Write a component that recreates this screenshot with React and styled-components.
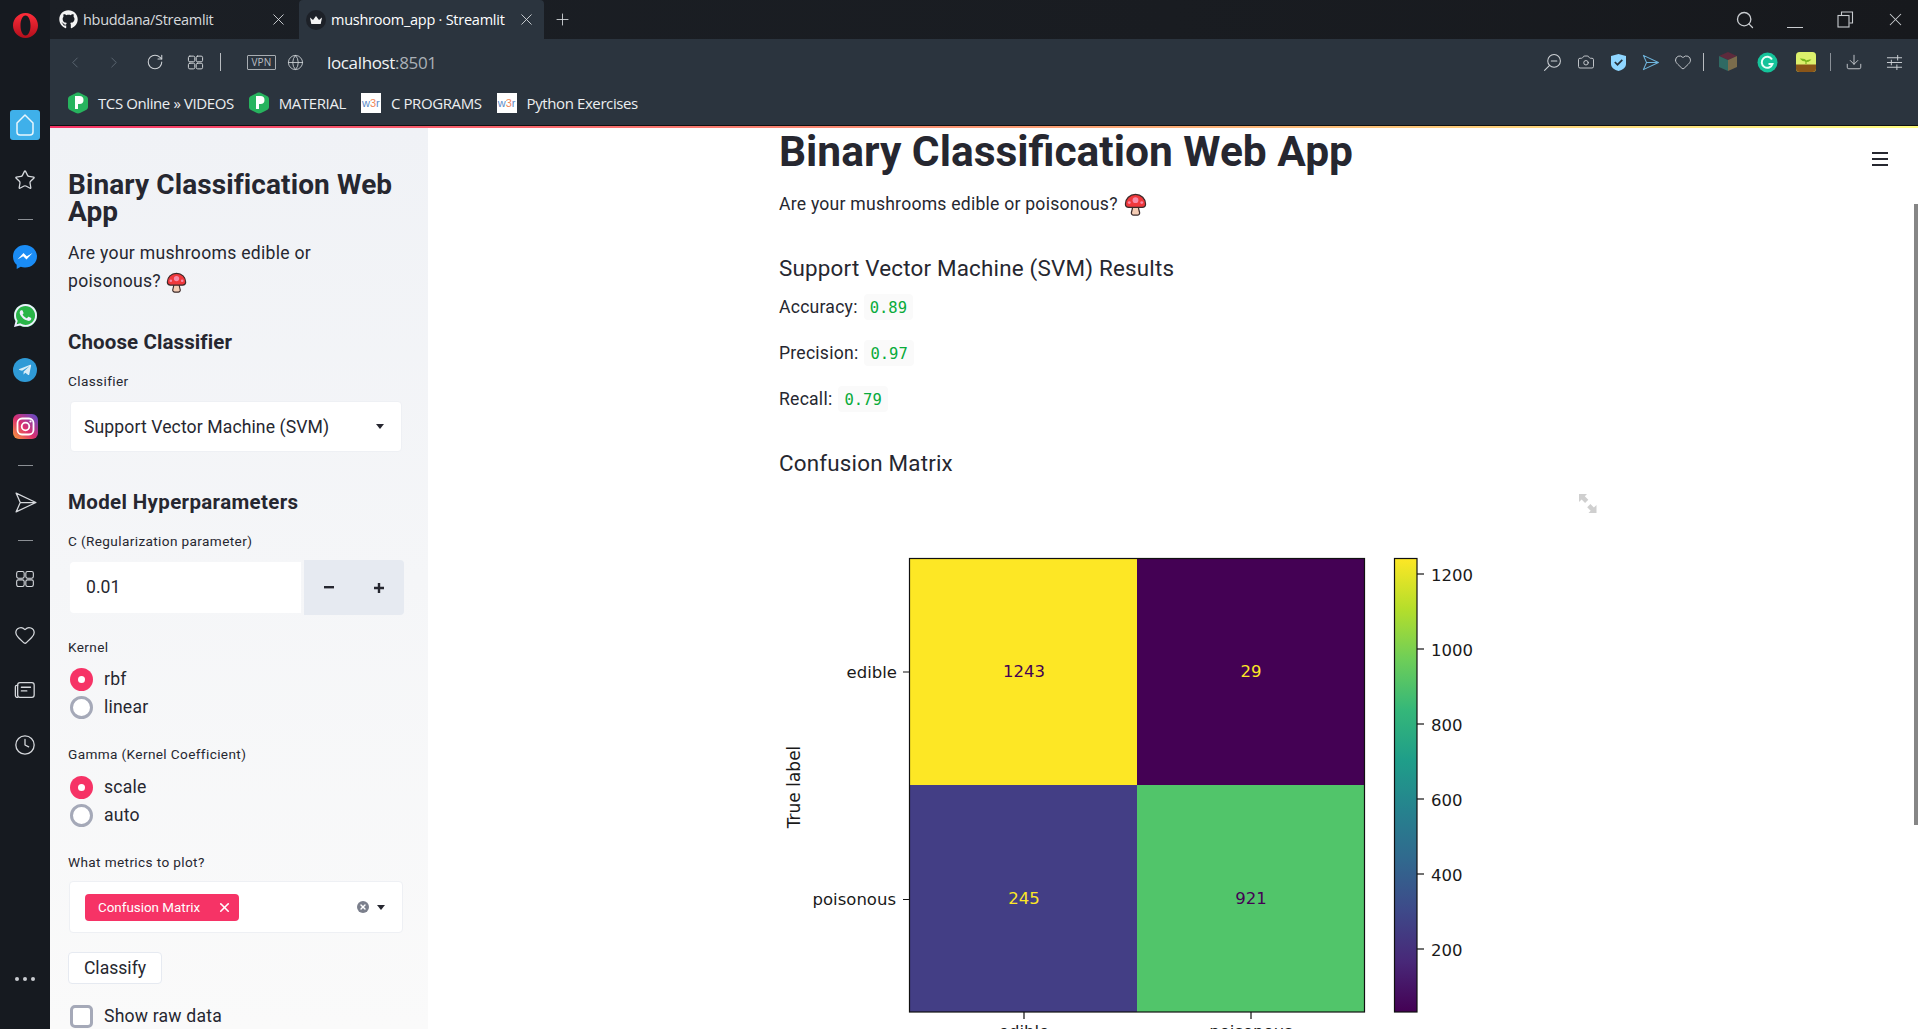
import React from "react";
import styled, { createGlobalStyle } from "styled-components";
import { FaGithub, FaWhatsapp, FaTelegramPlane } from "react-icons/fa";
import { Star, Heart, Clock, Camera, Download, Globe, RotateCw, ChevronLeft, ChevronRight, Plus, X, Search } from "lucide-react";

const Global = createGlobalStyle`
  html, body { margin: 0; padding: 0; height: 100%; overflow: hidden; background: #fff; }
  * { box-sizing: border-box; }
`;

const PLEX = `Roboto, "Noto Sans", sans-serif`;
const CHROME = `"Open Sans", "Noto Sans", sans-serif`;

const Frame = styled.div`display: flex; width: 1918px; height: 1029px; overflow: hidden; position: relative; background: #fff;`;
const Rail = styled.aside`width: 50px; flex: none; background: #161a20; display: flex; flex-direction: column; align-items: center; color: #d5d8dc;`;
const RailSlot = styled.div`height: ${p => p.$h}px; margin-bottom: ${p => p.$mb || 0}px; flex: none; display: flex; align-items: center; justify-content: center; width: 100%; position: relative;`;
const RailRule = styled.div`width: 15px; height: 1px; background: #8b8f94;`;
const RailSpacer = styled.div`flex: 1;`;
const HomeTile = styled.div`width: 30px; height: 30px; border-radius: 3px; background: #3fb0ea; display: flex; align-items: center; justify-content: center;`;
const Dots = styled.div`display: flex; gap: 4px;`;
const Dot = styled.i`width: 4px; height: 4px; border-radius: 50%; background: #c9ccd0;`;
const TgCircle = styled.div`width: 24px; height: 24px; border-radius: 50%; background: #2f9ad6; color: #d9edf7; display: flex; align-items: center; justify-content: center; font-size: 14px;`;
const WaDisc = styled.div`width: 23px; height: 23px; border-radius: 50%; background: #29b548; color: #eef; display: flex; align-items: center; justify-content: center; font-size: 27px; line-height: 0;`;

const Column = styled.div`flex: 1; min-width: 0; display: flex; flex-direction: column;`;
const TabStrip = styled.div`height: 39px; flex: none; display: flex; background: linear-gradient(90deg, #1b1f25, #191c21 60%, #17191d);`;
const Tab = styled.div`
  width: ${p => p.$w}px; height: 39px; display: flex; align-items: center; flex: none; padding-left: ${p => p.$pl}px;
  background: ${p => p.$active ? "#2b343e" : "transparent"};
  border-radius: ${p => p.$active ? "4px 4px 0 0" : "0"};
  color: ${p => p.$active ? "#fff" : "#d7dadd"};
  font: 14.5px ${CHROME}; letter-spacing: ${p => p.$active ? -0.25 : -0.3}px; white-space: nowrap;
`;
const TabTitle = styled.span`flex: 1; margin-left: ${p => p.$ml}px;`;
const TabClose = styled.span`display: flex; margin-right: ${p => p.$mr}px; color: #dcdfe2;`;
const NewTab = styled.div`margin-left: 9px; height: 39px; display: flex; align-items: center; color: #d7dadd;`;
const StripSpacer = styled.div`flex: 1;`;
const WinControls = styled.div`display: flex; align-items: center; color: #c9ccd0;`;
const WinBtn = styled.div`width: ${p => p.$w}px; margin-left: ${p => p.$ml || 0}px; display: flex; justify-content: center; align-items: center;`;

const Toolbar = styled.div`height: 46px; flex: none; background: #2b343e; display: flex; align-items: center; padding-left: 16px; color: #cfd3d7;`;
const NavSlot = styled.div`width: ${p => p.$w}px; flex: none; display: flex; align-items: center; justify-content: center; color: ${p => p.$dim ? "#5f6a75" : "#cfd3d7"};`;
const Divider = styled.div`width: 1px; height: 18px; background: ${p => p.$c || "#b8bcc0"}; flex: none;`;
const VpnBadge = styled.div`width: 29px; height: 15px; border: 1px solid #a8adb2; border-radius: 1px; font: 10px/13px ${CHROME}; letter-spacing: .2px; text-align: center; color: #b9bdc1; margin-left: 26px;`;
const Address = styled.div`margin-left: 18px; font: 17px ${CHROME}; letter-spacing: -0.35px; color: #f1f3f4; flex: 1;`;
const Port = styled.span`color: #aab0b6;`;
const Tools = styled.div`display: flex; align-items: center;`;
const ToolSlot = styled.div`width: ${p => p.$w}px; flex: none; display: flex; align-items: center; justify-content: center;`;

const Bookmarks = styled.div`height: 41px; flex: none; background: #2b343e; display: flex; align-items: center; padding: 0 0 4px 18px; color: #eceef0; font: 15px ${CHROME}; letter-spacing: -0.4px; border-bottom: 1px solid #111;`;
const Bookmark = styled.div`display: flex; align-items: center; margin-right: 15px; white-space: nowrap;`;
const BookmarkLabel = styled.span`margin-left: 10px;`;
const W3 = styled.span`width: 20px; height: 20px; background: #fff; display: inline-flex; align-items: center; justify-content: center; font: 11px "Liberation Sans", sans-serif; color: #5b8bc9; letter-spacing: 0;`;
const W3Three = styled.span`color: #f0875a;`;

const Accent = styled.div`height: 2px; flex: none; background: linear-gradient(90deg, #f63366, #fffd80);`;
const Body = styled.div`flex: 1; min-height: 0; display: flex; position: relative;`;

const Sidebar = styled.aside`width: 378px; flex: none; padding: 43px 25px 0 18px; background: linear-gradient(180deg, #f0f2f6, #fafafa); color: #262730; font-family: ${PLEX};`;
const SideTitle = styled.h1`margin: 0; font-size: 28px; line-height: 27px; font-weight: 700; letter-spacing: .1px;`;
const SidePara = styled.p`margin: 14px 0 0; font-size: 17.6px; line-height: 28px; width: 290px; letter-spacing: .28px;`;
const SideHeading = styled.h3`margin: ${p => p.$mt}px 0 0; font-size: 20.5px; line-height: 28px; font-weight: 700; letter-spacing: ${p => p.$ls}px;`;
const FieldLabel = styled.div`margin-top: ${p => p.$mt}px; font-size: 13.6px; line-height: 18px; letter-spacing: .38px;`;
const SelectBox = styled.div`
  margin: ${p => p.$mt}px 0 0 ${p => p.$ml}px; height: ${p => p.$h}px; width: ${p => p.$w}px; background: #fff; border: 1px solid #eef0f4; border-radius: 4px;
  display: flex; align-items: center; padding: 0 17px 0 ${p => p.$pl}px; font-size: 17.6px; letter-spacing: .1px;
`;
const SelectValue = styled.span`flex: 1;`;
const Caret = styled.i`width: 0; height: 0; border: 4px solid transparent; border-top: 5px solid #262730; border-bottom: 0; margin-left: ${p => p.$ml || 0}px;`;
const NumberRow = styled.div`margin-top: 10px; height: 55px; width: 336px; display: flex; align-items: center;`;
const NumberInput = styled.div`width: 232px; height: 51px; margin-left: 2px; background: #fff; padding-left: 16px; font-size: 17.6px; line-height: 51px; border-radius: 4px 0 0 4px;`;
const Stepper = styled.div`width: 101px; height: 55px; margin-left: 3px; background: #e6eaf1; border-radius: 0 4px 4px 0; display: flex;`;
const StepBtn = styled.div`flex: 1; display: flex; align-items: center; justify-content: center;`;
const RadioGroup = styled.div`margin-top: ${p => p.$mt}px;`;
const OptionRow = styled.div`height: 28px; display: flex; align-items: center; font-size: 17.6px; padding-left: 2px; letter-spacing: .2px;`;
const RadioMark = styled.span`
  width: 23px; height: 23px; border-radius: 50%; flex: none; margin-right: 11px; display: flex; align-items: center; justify-content: center;
  background: ${p => p.$on ? "#f63366" : "#fff"}; border: ${p => p.$on ? "0" : "3px solid #a5a9b8"};
`;
const RadioPip = styled.i`width: 7px; height: 7px; border-radius: 50%; background: #fff;`;
const CheckMark = styled.span`width: 23px; height: 23px; border-radius: 5px; flex: none; margin-right: 11px; background: #fff; border: 3px solid #a5a9b8;`;
const Tag = styled.div`width: 154px; height: 27px; background: #f63366; border-radius: 4px; color: #fff; font-size: 13.4px; letter-spacing: 0; display: flex; align-items: center; justify-content: space-between; padding: 0 7px 0 13px;`;
const Grow = styled.div`flex: 1;`;
const ClearDot = styled.span`width: 12px; height: 12px; border-radius: 50%; background: #7b7f8c; display: flex; align-items: center; justify-content: center; color: #fff;`;
const ClassifyBtn = styled.div`margin-top: 19px; width: 94px; height: 32px; background: #fff; border: 1px solid #e6eaf1; border-radius: 4px; font-size: 17.6px; line-height: 30px; text-align: center;`;
const CheckRow = styled(OptionRow)`margin-top: 18px;`;

const Main = styled.main`flex: 1; min-width: 0; padding-left: 351px; color: #262730; font-family: ${PLEX}; background: #fff; overflow: hidden; position: relative;`;
const Title = styled.h1`margin: 0; font-size: 42.5px; line-height: 48px; font-weight: 700;`;
const Para = styled.p`margin: ${p => p.$mt}px 0 0; font-size: 17.6px; line-height: 28px; display: flex; align-items: center; letter-spacing: .23px;`;
const SubTitle = styled.h3`margin: ${p => p.$mt}px 0 0; font-size: 22.4px; line-height: 32px; font-weight: 400; letter-spacing: .2px;`;
const Code = styled.code`margin-left: 6px; height: 26px; display: inline-flex; align-items: center; padding: 1px 6px 0; background: #fafafa; border-radius: 4px; font: 15.5px "DejaVu Sans Mono", monospace; letter-spacing: 0; color: #09ab3b;`;
const ChartSvg = styled.svg`display: block; margin-top: 11px; width: 840px; height: 550px; overflow: hidden;`;
const MenuBtn = styled.div`position: absolute; top: 24px; right: 30px; width: 16px; height: 14px; display: flex; flex-direction: column; justify-content: space-between;`;
const MenuLine = styled.i`height: 2px; background: #262730;`;
const ScrollThumb = styled.div`position: absolute; top: 76px; right: 0; width: 4px; height: 621px; background: #868686;`;
const MushroomSvg = styled.svg`flex: none; margin: -6px 0 -6px ${p => p.$ml}px; vertical-align: middle;`;

const Mushroom = ({ size = 23, ml = 6 }) => (
  <MushroomSvg $ml={ml} width={size} height={size} viewBox="0 0 24 24">
    <path d="M9 14h6c.2 3 1 5 1.3 6.5.2 1.3-.8 2.5-2.3 2.5h-4c-1.500 0-2.500-1.200-2.300-2.500C8 19 8.800 17 9 14z" fill="#f5cdb5" stroke="#3a2a2a" strokeWidth="1.300" />
    <path d="M12 1.500C6 1.500 1.500 6 1.500 11.500c0 2 1.500 3.500 3.500 3.500h14c2 0 3.500-1.500 3.500-3.500C22.500 6 18 1.500 12 1.500z" fill="#f0383c" stroke="#3a2a2a" strokeWidth="1.300" />
    <circle cx="12" cy="7.500" r="3" fill="#f78aa8" />
    <circle cx="5.500" cy="10" r="1.500" fill="#f78aa8" />
    <circle cx="18.500" cy="10" r="1.500" fill="#f78aa8" />
  </MushroomSvg>
);

const OperaLogo = () => (
  <svg width="25" height="25" viewBox="0 0 25 25">
    <defs><linearGradient id="op" x1="0" y1="0" x2="0" y2="1"><stop offset="0" stopColor="#ff2d3a" /><stop offset="1" stopColor="#b30f1c" /></linearGradient></defs>
    <path fillRule="evenodd" fill="url(#op)" d="M12.500 0C19.400 0 25 5.600 25 12.500S19.400 25 12.500 25 0 19.400 0 12.500 5.600 0 12.500 0zm0 2.500c-3 0-5 4.500-5 10s2 10 5 10 5-4.500 5-10-2-10-5-10z" />
  </svg>
);

const CrownIcon = () => (
  <svg width="20" height="20" viewBox="0 0 20 20">
    <circle cx="10" cy="10" r="10" fill="#1d2128" />
    <path d="M4 7.500l3 2.500 3-4 3 4 3-2.500-1.300 6.500H5.300z" fill="#f4f4f4" />
  </svg>
);

const PIcon = () => (
  <svg width="20" height="22" viewBox="0 0 20 22">
    <path d="M8 1L2 4C.800 4.600 0 5.800 0 7v8c0 1.200.800 2.400 2 3l6 3c1.300.600 2.700.600 4 0l6-3c1.200-.600 2-1.800 2-3V7c0-1.200-.800-2.400-2-3l-6-3C10.700.400 9.300.400 8 1z" fill="#27b35e" />
    <path d="M7 4h4.500a4 4 0 0 1 0 8H10v5H7z" fill="#fff" />
  </svg>
);

const Cube = () => (
  <svg width="20" height="20" viewBox="0 0 20 20">
    <path d="M10 0l9 4-9 4-9-4z" fill="#5d2a3c" />
    <path d="M1 4l9 4v11l-9-4z" fill="#2f6a63" />
    <path d="M19 4l-9 4v11l9-4z" fill="#7a6c4c" />
  </svg>
);

const Grammarly = () => (
  <svg width="21" height="21" viewBox="0 0 21 21">
    <circle cx="10.500" cy="10.500" r="10" fill="#15c39a" />
    <path d="M15 7.500a5.500 5.500 0 1 0 .5 4.500h-4" fill="none" stroke="#eafff8" strokeWidth="2" />
  </svg>
);

const Forest = () => (
  <svg width="20" height="20" viewBox="0 0 20 20">
    <rect width="20" height="20" rx="3.500" fill="#dcf06c" />
    <path d="M0 12.500h20V16.500a3.500 3.500 0 0 1-3.500 3.500h-13A3.500 3.500 0 0 1 0 16.500z" fill="#8a5518" />
    <path d="M10 12V9M10 9C8 9 6 8.500 5 7c2 0 4 .3 5 2zm0 .5c1.500 0 3-.5 4-1.500-1.800 0-3.200.3-4 1.500z" stroke="#7cb61f" strokeWidth="1.200" fill="#7cb61f" />
  </svg>
);

const Line = ({ w = 18, children, c = "currentColor", sw = 1.300, vb = 24 }) => (
  <svg width={w} height={w} viewBox={`0 0 ${vb} ${vb}`} fill="none" stroke={c} strokeWidth={sw} strokeLinejoin="round" strokeLinecap="round">{children}</svg>
);

const GridIcon = ({ w = 17, sw = 1.400 }) => (
  <Line w={w} sw={sw}>
    <rect x="2" y="3" width="9" height="8" rx="2" /><rect x="13" y="3" width="9" height="8" rx="2" />
    <rect x="2" y="13" width="9" height="8" rx="2" /><rect x="13" y="13" width="9" height="8" rx="2" />
  </Line>
);

const SendIcon = ({ w = 22, c = "currentColor", sw = 1.300 }) => (
  <Line w={w} c={c} sw={sw}><path d="M3 3l19 9-19 9 4-9zM7 12h15" /></Line>
);

const ticks = [[1200, 574], [1000, 649], [800, 724], [600, 799], [400, 874], [200, 949]];
const viridis = ["#fde725", "#b5de2b", "#6ece58", "#35b779", "#1f9e89", "#26828e", "#31688e", "#3e4989", "#482878", "#440154"];
const chartText = { fontFamily: "DejaVu Sans, sans-serif", fontSize: 16.500, fill: "#1a1a1a" };
const cellText = { fontFamily: "DejaVu Sans, sans-serif", fontSize: 16.500, textAnchor: "middle" };

const Chart = () => (
  <ChartSvg viewBox="779 490 840 550">
    <defs>
      <linearGradient id="vir" x1="0" y1="0" x2="0" y2="1">
        {viridis.map((c, i) => <stop key={c} offset={i / (viridis.length - 1)} stopColor={c} />)}
      </linearGradient>
    </defs>
    <g fill="#cfcfcf">
      <path d="M1579 494h8l-2.200 2.200 3.500 3.500-3.200 3.200-3.500-3.500-2.600 2.600z" />
      <path d="M1596.500 513h-8l2.200-2.200-3.500-3.500 3.200-3.200 3.500 3.500 2.600-2.600z" />
    </g>
    <rect x="909" y="558" width="228" height="227" fill="#fde725" />
    <rect x="1137" y="558" width="228" height="227" fill="#440154" />
    <rect x="909" y="785" width="228" height="227" fill="#433e85" />
    <rect x="1137" y="785" width="228" height="227" fill="#51c56a" />
    <rect x="909.500" y="558.500" width="455" height="453.500" fill="none" stroke="#111" strokeWidth="1.200" />
    <text x="1024" y="677" {...cellText} fill="#440154">1243</text>
    <text x="1251" y="677" {...cellText} fill="#fde725">29</text>
    <text x="1024" y="904" {...cellText} fill="#fde725">245</text>
    <text x="1251" y="904" {...cellText} fill="#440154">921</text>
    <path d="M903 672h6M903 899.500h6M1024 1012v7M1251 1012v7" stroke="#111" strokeWidth="1.200" />
    <text x="897" y="678" textAnchor="end" {...chartText}>edible</text>
    <text x="896" y="905" textAnchor="end" {...chartText}>poisonous</text>
    <text x="1024" y="1037" textAnchor="middle" {...chartText}>edible</text>
    <text x="1251" y="1037" textAnchor="middle" {...chartText}>poisonous</text>
    <text transform="translate(800 787) rotate(-90)" textAnchor="middle" {...chartText} fontSize="17">True label</text>
    <rect x="1394.500" y="558.500" width="22.500" height="453.500" fill="url(#vir)" stroke="#111" strokeWidth="1.200" />
    {ticks.map(([n, y]) => (
      <g key={n}>
        <path d={`M1417 ${y}h7`} stroke="#111" strokeWidth="1.200" />
        <text x="1431" y={y + 6.500} {...chartText}>{n}</text>
      </g>
    ))}
  </ChartSvg>
);

export default function App() {
  return (
    <Frame>
      <Global />
      <Rail>
        <RailSlot $h={50} $mb={50}><OperaLogo /></RailSlot>
        <RailSlot $h={50}>
          <HomeTile>
            <svg width="20" height="24" viewBox="0 0 20 24" fill="none" stroke="#e9f6fd" strokeWidth="1.500"><path d="M10 2l8 8v9a3 3 0 0 1-3 3H5a3 3 0 0 1-3-3v-9z" strokeLinejoin="round" /></svg>
          </HomeTile>
        </RailSlot>
        <RailSlot $h={60}><Star size={22} strokeWidth={1.400} /></RailSlot>
        <RailSlot $h={18}><RailRule /></RailSlot>
        <RailSlot $h={58}>
          <svg width="26" height="26" viewBox="0 0 26 26">
            <path d="M13 1C6.200 1 1 5.900 1 12.400c0 3.400 1.400 6.300 3.700 8.300v4.300l4-2.200c1.400.4 2.800.6 4.300.6 6.800 0 12-4.900 12-11S19.800 1 13 1z" fill="#1a8cf5" />
            <path d="M5.500 15.500l6-6.500 3.300 3.300L20.500 9l-6 6.500-3.300-3.300z" fill="#fff" />
          </svg>
        </RailSlot>
        <RailSlot $h={58}><WaDisc><FaWhatsapp /></WaDisc></RailSlot>
        <RailSlot $h={52}><TgCircle><FaTelegramPlane /></TgCircle></RailSlot>
        <RailSlot $h={60}>
          <svg width="25" height="25" viewBox="0 0 25 25" fill="none">
            <defs><linearGradient id="ig" x1="0" y1="1" x2="1" y2="0"><stop offset="0" stopColor="#f9a03c" /><stop offset=".45" stopColor="#dc2f6e" /><stop offset="1" stopColor="#5a4fcf" /></linearGradient></defs>
            <rect width="25" height="25" rx="6" fill="url(#ig)" />
            <rect x="4.500" y="4.500" width="16" height="16" rx="4.500" stroke="#fff" strokeWidth="1.800" />
            <circle cx="12.500" cy="12.500" r="3.800" stroke="#fff" strokeWidth="1.800" />
            <circle cx="17.500" cy="7.500" r="1.100" fill="#fff" />
          </svg>
        </RailSlot>
        <RailSlot $h={18}><RailRule /></RailSlot>
        <RailSlot $h={56}><SendIcon w={25} sw={1.200} /></RailSlot>
        <RailSlot $h={21}><RailRule /></RailSlot>
        <RailSlot $h={56}><GridIcon w={20} sw={1.300} /></RailSlot>
        <RailSlot $h={55}><Heart size={22} strokeWidth={1.400} /></RailSlot>
        <RailSlot $h={56}>
          <Line w={22} sw={1.400}><rect x="4" y="4" width="18" height="16" rx="2.500" /><path d="M4 7H3a1.500 1.500 0 0 0-1.500 1.500V18A2 2 0 0 0 4 20M8 9h10M8 13h6" /></Line>
        </RailSlot>
        <RailSlot $h={54}><Clock size={22} strokeWidth={1.400} /></RailSlot>
        <RailSpacer />
        <RailSlot $h={48} $mb={26}><Dots><Dot /><Dot /><Dot /></Dots></RailSlot>
      </Rail>
      <Column>
        <TabStrip>
          <Tab $w={249} $pl={9}>
            <FaGithub size={19} color="#f4f4f4" />
            <TabTitle $ml={5}>hbuddana/Streamlit</TabTitle>
            <TabClose $mr={11}><X size={19} strokeWidth={1.100} /></TabClose>
          </Tab>
          <Tab $w={245} $pl={7} $active>
            <CrownIcon />
            <TabTitle $ml={5}>mushroom_app · Streamlit</TabTitle>
            <TabClose $mr={8}><X size={19} strokeWidth={1.100} /></TabClose>
          </Tab>
          <NewTab><Plus size={19} strokeWidth={1.100} /></NewTab>
          <StripSpacer />
          <WinControls>
            <WinBtn $w={50}><Search size={20} strokeWidth={1.600} /></WinBtn>
            <WinBtn $w={50}>
              <svg width="16" height="16" viewBox="0 0 16 16" stroke="currentColor" fill="none"><path d="M0 15.500h16" /></svg>
            </WinBtn>
            <WinBtn $w={50}>
              <svg width="17" height="17" viewBox="0 0 17 17" stroke="currentColor" fill="none" strokeWidth="1.100"><path d="M4.500 4V1h11v11h-3" /><rect x="1" y="4.500" width="11" height="11.500" /></svg>
            </WinBtn>
            <WinBtn $w={46} $ml={2}><X size={21} strokeWidth={1.200} /></WinBtn>
          </WinControls>
        </TabStrip>
        <Toolbar>
          <NavSlot $w={18} $dim><ChevronLeft size={19} strokeWidth={1.200} /></NavSlot>
          <NavSlot $w={21} />
          <NavSlot $w={18} $dim><ChevronRight size={19} strokeWidth={1.200} /></NavSlot>
          <NavSlot $w={19} />
          <NavSlot $w={26}><RotateCw size={18} strokeWidth={1.400} /></NavSlot>
          <NavSlot $w={14} />
          <NavSlot $w={26}><GridIcon w={17} /></NavSlot>
          <NavSlot $w={12} />
          <Divider />
          <VpnBadge>VPN</VpnBadge>
          <NavSlot $w={5} />
          <NavSlot $w={28}><Globe size={17} strokeWidth={1.200} /></NavSlot>
          <Address>localhost<Port>:8501</Port></Address>
          <Tools>
            <ToolSlot $w={33}>
              <Line w={19}><circle cx="14" cy="10" r="8" /><path d="M8 16l-6 6M10.500 10h7" /></Line>
            </ToolSlot>
            <ToolSlot $w={33}><Camera size={18} strokeWidth={1.200} /></ToolSlot>
            <ToolSlot $w={32}>
              <svg width="15" height="17" viewBox="0 0 15 17"><path d="M7.500 0L15 2v8c0 3.500-3.500 6-7.500 7C3.500 16 0 13.500 0 10V2z" fill="#8fd6ff" /><path d="M3.800 8l2.700 2.700 4.800-4.800" fill="none" stroke="#27313b" strokeWidth="1.700" /></svg>
            </ToolSlot>
            <ToolSlot $w={33}><SendIcon w={19} c="#6fb6de" /></ToolSlot>
            <ToolSlot $w={32}><Heart size={18} strokeWidth={1.200} /></ToolSlot>
            <ToolSlot $w={9}><Divider /></ToolSlot>
            <ToolSlot $w={40}><Cube /></ToolSlot>
            <ToolSlot $w={38}><Grammarly /></ToolSlot>
            <ToolSlot $w={39}><Forest /></ToolSlot>
            <ToolSlot $w={10}><Divider $c="#8a9097" /></ToolSlot>
            <ToolSlot $w={37}><Download size={18} strokeWidth={1.200} /></ToolSlot>
            <ToolSlot $w={44}>
              <Line w={19} sw={1.200}><path d="M3 6h18M3 12h18M3 18h18M16 3v6M8 9v6M15 15v6" /></Line>
            </ToolSlot>
            <ToolSlot $w={2} />
          </Tools>
        </Toolbar>
        <Bookmarks>
          <Bookmark><PIcon /><BookmarkLabel>TCS Online » VIDEOS</BookmarkLabel></Bookmark>
          <Bookmark><PIcon /><BookmarkLabel>MATERIAL</BookmarkLabel></Bookmark>
          <Bookmark><W3>w<W3Three>3</W3Three>r</W3><BookmarkLabel>C PROGRAMS</BookmarkLabel></Bookmark>
          <Bookmark><W3>w<W3Three>3</W3Three>r</W3><BookmarkLabel>Python Exercises</BookmarkLabel></Bookmark>
        </Bookmarks>
        <Accent />
        <Body>
          <Sidebar>
            <SideTitle>Binary Classification Web App</SideTitle>
            <SidePara>Are your mushrooms edible or poisonous? <Mushroom ml={0} size={21} /></SidePara>
            <SideHeading $mt={33} $ls={0.1}>Choose Classifier</SideHeading>
            <FieldLabel $mt={16}>Classifier</FieldLabel>
            <SelectBox $mt={11} $h={51} $w={332} $ml={2} $pl={13}><SelectValue>Support Vector Machine (SVM)</SelectValue><Caret /></SelectBox>
            <SideHeading $mt={36} $ls={0.35}>Model Hyperparameters</SideHeading>
            <FieldLabel $mt={16}>C (Regularization parameter)</FieldLabel>
            <NumberRow>
              <NumberInput>0.01</NumberInput>
              <Stepper>
                <StepBtn><svg width="10" height="3"><rect width="10" height="2.400" fill="#262730" /></svg></StepBtn>
                <StepBtn><svg width="10" height="10"><path d="M0 5h10M5 0v10" stroke="#262730" strokeWidth="2.400" /></svg></StepBtn>
              </Stepper>
            </NumberRow>
            <FieldLabel $mt={23}>Kernel</FieldLabel>
            <RadioGroup $mt={9}>
              <OptionRow><RadioMark $on><RadioPip /></RadioMark>rbf</OptionRow>
              <OptionRow><RadioMark />linear</OptionRow>
            </RadioGroup>
            <FieldLabel $mt={24}>Gamma (Kernel Coefficient)</FieldLabel>
            <RadioGroup $mt={10}>
              <OptionRow><RadioMark $on><RadioPip /></RadioMark>scale</OptionRow>
              <OptionRow><RadioMark />auto</OptionRow>
            </RadioGroup>
            <FieldLabel $mt={24}>What metrics to plot?</FieldLabel>
            <SelectBox $mt={10} $h={52} $w={334} $ml={1} $pl={15}>
              <Tag>Confusion Matrix<X size={15} strokeWidth={2.600} /></Tag>
              <Grow />
              <ClearDot><X size={8} strokeWidth={4} /></ClearDot>
              <Caret $ml={8} />
            </SelectBox>
            <ClassifyBtn>Classify</ClassifyBtn>
            <CheckRow><CheckMark />Show raw data</CheckRow>
          </Sidebar>
          <Main>
            <Title>Binary Classification Web App</Title>
            <Para $mt={14}>Are your mushrooms edible or poisonous?<Mushroom /></Para>
            <SubTitle $mt={34}>Support Vector Machine (SVM) Results</SubTitle>
            <Para $mt={9}>Accuracy:<Code>0.89</Code></Para>
            <Para $mt={18}>Precision:<Code>0.97</Code></Para>
            <Para $mt={18}>Recall:<Code>0.79</Code></Para>
            <SubTitle $mt={34}>Confusion Matrix</SubTitle>
            <Chart />
            <MenuBtn><MenuLine /><MenuLine /><MenuLine /></MenuBtn>
            <ScrollThumb />
          </Main>
        </Body>
      </Column>
    </Frame>
  );
}
